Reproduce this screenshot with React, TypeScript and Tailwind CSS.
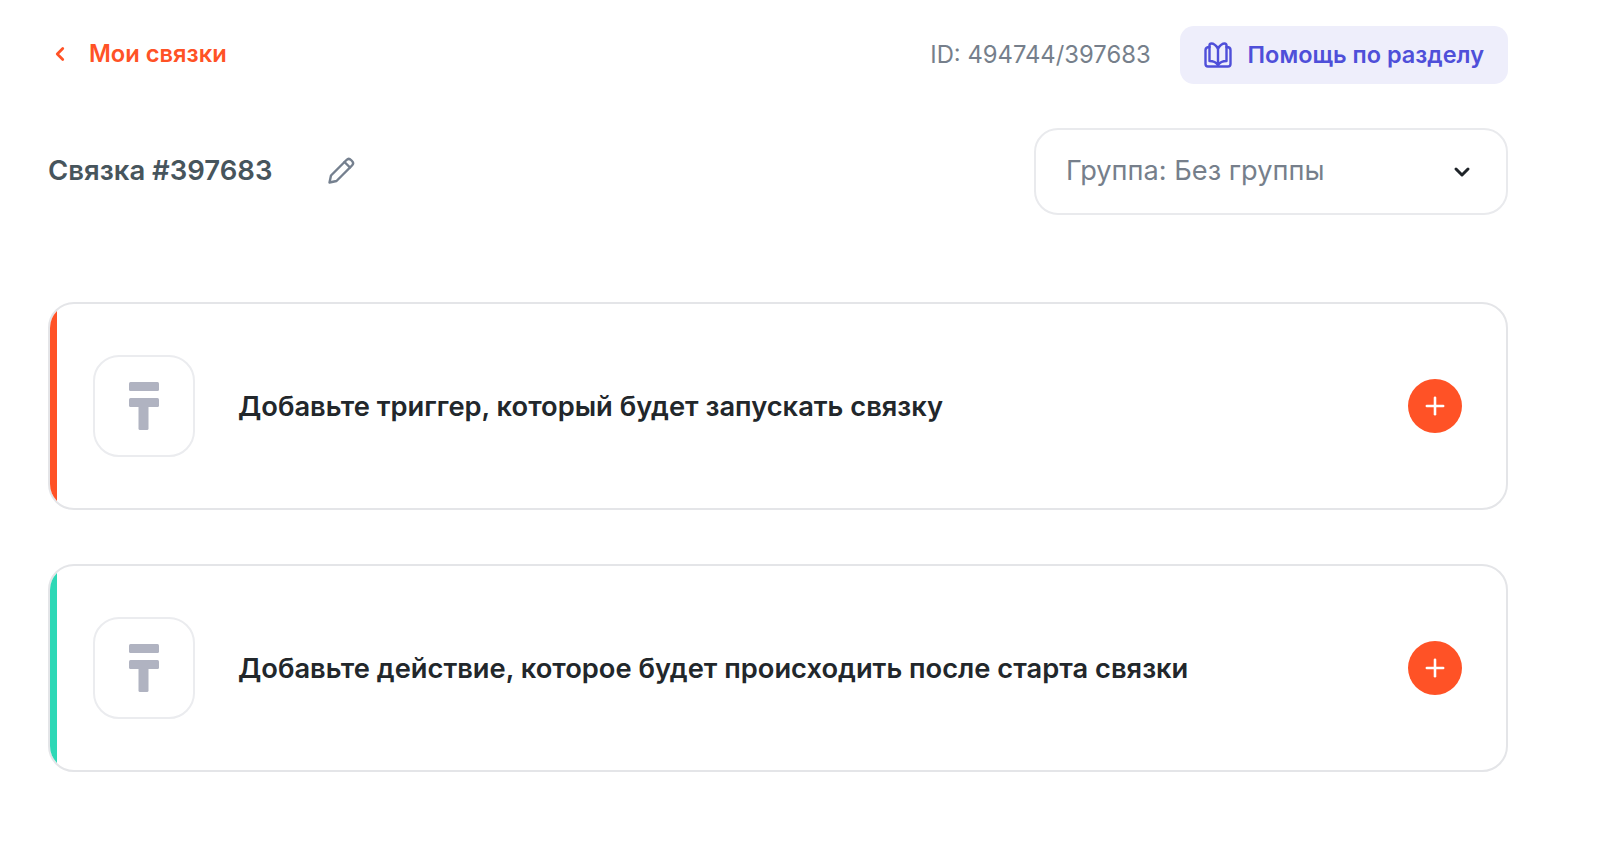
import { ChevronDown, ChevronLeft, Plus } from "lucide-react";

function BookIcon() {
  return (
    <svg width="28" height="26" viewBox="0 0 28 26" fill="none" stroke="currentColor" strokeWidth="2.4" strokeLinejoin="round" strokeLinecap="round">
      <path d="M14 6.500C12 3.500 9.500 1.500 7.500 1.500 6 1.500 5.500 2.500 5.500 3.500V19c4 0 6.500 1 8.500 4 2-3 4.500-4 8.500-4V3.500c0-1-.5-2-2-2-2 0-4.500 2-6.500 5Z" />
      <path d="M14 6.500V23" />
      <path d="M5.500 5C3 5 1.500 6 1.500 8v14c0 1.500 1 2.500 2.500 2.500h20c1.500 0 2.500-1 2.500-2.500V8c0-2-1.500-3-4-3" />
    </svg>
  );
}

function PencilIcon() {
  return (
    <svg width="28" height="28" viewBox="0 0 28 28" fill="none" stroke="#75808f" strokeWidth="2.400" strokeLinejoin="round" strokeLinecap="round">
      <path d="M2.500 25.500 4 18.500 19.500 3c1.500-1.500 3-1.500 4.500 0l1 1c1.500 1.500 1.500 3 0 4.500L9.500 24Z" />
      <path d="M17.500 5 23 10.500" />
    </svg>
  );
}

function TengeIcon() {
  return (
    <svg width="30" height="48" viewBox="0 0 30 48" fill="#b0b3c1">
      <rect x="0" y="0" width="30" height="9" rx="1.500" />
      <rect x="0" y="16" width="30" height="9" rx="1.500" />
      <rect x="9.500" y="16" width="10" height="32" rx="1.500" />
    </svg>
  );
}

function StepCard({ text, accent }: { text: string; accent: string }) {
  return (
    <div className="relative flex h-[208px] items-center overflow-hidden rounded-[26px] border-2 border-[#e4e5e8] bg-white pl-[43px] pr-[44px]">
      <div className={`absolute bottom-0 left-0 top-0 w-[7px] ${accent}`} />
      <div className="flex h-[102px] w-[102px] shrink-0 items-center justify-center rounded-[26px] border-2 border-[#ebecef]">
        <TengeIcon />
      </div>
      <p className="ml-[43px] mt-[2px] flex-1 text-[27.300px] font-semibold text-[#22272b]">{text}</p>
      <button className="flex h-[54px] w-[54px] shrink-0 items-center justify-center rounded-full bg-[#ff5226] text-white">
        <Plus size={28} strokeWidth={2.2} />
      </button>
    </div>
  );
}

export default function App() {
  return (
    <div className="min-h-[855px] bg-white pl-[48px] pr-[92px] pt-[26px] font-['Inter',sans-serif]">
      <div className="flex h-[58px] items-center justify-between">
        <a className="-mt-[2px] flex items-center text-[23.700px] font-semibold text-[#ff5226]">
          <ChevronLeft size={22} strokeWidth={3} className="ml-[1px]" />
          <span className="ml-[18px]">Мои связки</span>
        </a>
        <div className="flex items-center">
          <span className="mr-[29px] text-[23.800px] text-[#767f8b]">ID: 494744/397683</span>
          <button className="flex h-[58px] items-center gap-[16px] rounded-[14px] bg-[#eeeefb] px-[24px] text-[23.500px] font-semibold text-[#4f4fd9]">
            <BookIcon />
            Помощь по разделу
          </button>
        </div>
      </div>

      <div className="mt-[44px] flex items-center justify-between">
        <div className="-mt-[2px] flex items-center">
          <h1 className="text-[27.500px] font-semibold text-[#47555c]">Связка #397683</h1>
          <span className="ml-[55px]">
            <PencilIcon />
          </span>
        </div>
        <div className="flex h-[87px] w-[474px] items-center justify-between rounded-[24px] border-2 border-[#e9eaed] pl-[30px] pr-[32px] text-[27.200px] text-[#767f8b]">
          Группа: Без группы
          <ChevronDown size={24} strokeWidth={3} className="text-[#1f2429]" />
        </div>
      </div>

      <div className="mt-[87px] flex flex-col gap-[54px]">
        <StepCard text="Добавьте триггер, который будет запускать связку" accent="bg-[#ff5226]" />
        <StepCard text="Добавьте действие, которое будет происходить после старта связки" accent="bg-[#2ed8b6]" />
      </div>
    </div>
  );
}
